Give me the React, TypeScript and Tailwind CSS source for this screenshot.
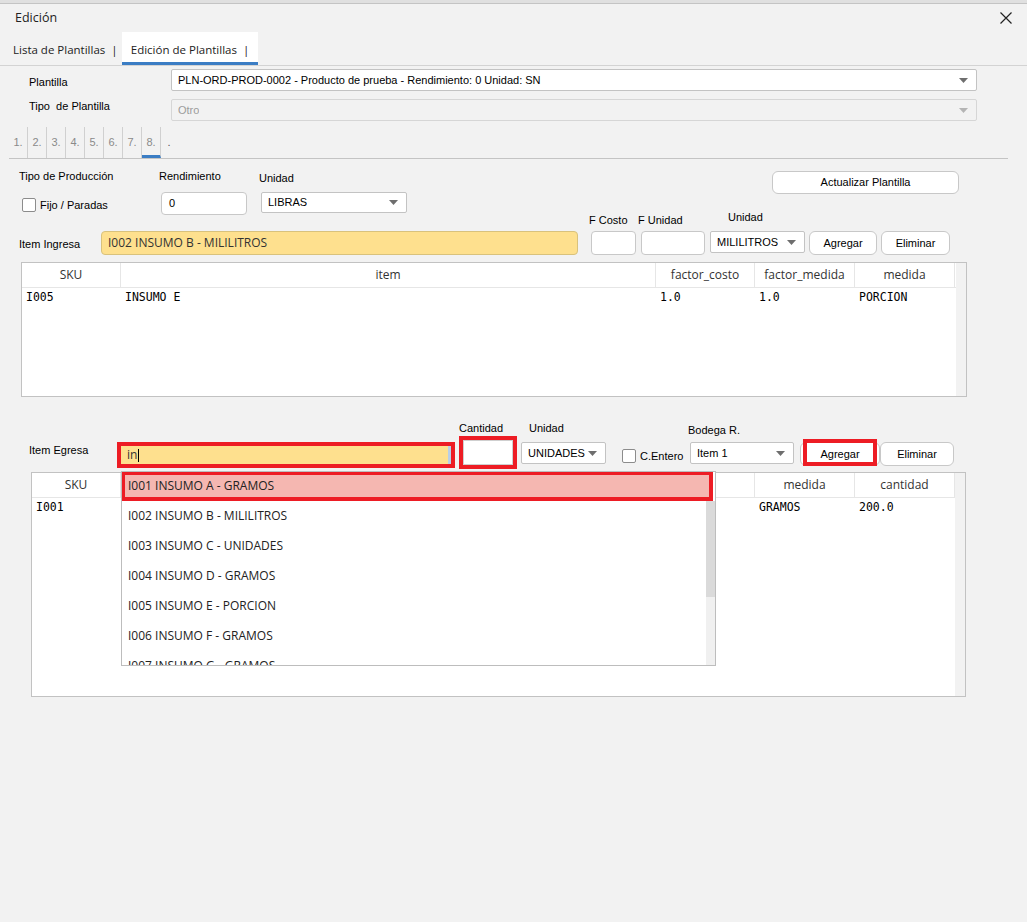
import React from 'react';
import clsx from 'clsx';

const mont = "font-['Open_Sans',sans-serif]";
const mono = "font-['DejaVu_Sans_Mono',monospace]";

// small triangle used by the combo boxes
function Caret({ muted }: { muted?: boolean }) {
    return (
        <svg width="9" height="5" viewBox="0 0 9 5">
            <path d="M0 0h9L4.5 5z" fill={muted ? '#b4b4b4' : '#6e6e6e'} />
        </svg>
    );
}

function Combo({ value, className, muted }: { value: string; className?: string; muted?: boolean }) {
    return (
        <div className={clsx(
            'flex items-center justify-between border rounded-[2px] pl-[6px] pr-[8px]',
            muted ? 'bg-[#f2f2f2] border-[#d6d6d6] text-[#9c9c9c]' : 'bg-white border-[#c3c3c3]',
            className
        )}>
            <span className="truncate">{value}</span>
            <Caret muted={muted} />
        </div>
    );
}

function Button({ label, className }: { label: string; className?: string }) {
    return (
        <div className={clsx('flex items-center justify-center bg-white border border-[#c8c8c8] rounded-[6px]', className)}>
            {label}
        </div>
    );
}

function Checkbox() {
    return <div className="w-[14px] h-[14px] bg-white border border-[#8c8c8c] rounded-[2px]" />;
}

type Col = { label: string; w: string };

function Grid({ cols, rows, className, children }: { cols: Col[]; rows: string[][]; className?: string; children?: React.ReactNode }) {
    return (
        <div className={clsx('relative flex bg-white border border-[#c2c2c2]', className)}>
            <div className="flex-1 flex flex-col">
                <div className={clsx('flex h-[25px] border-b border-[#e6e6e6] text-[12px] text-[#333]', mont)}>
                    {cols.map((c, i) => (
                        <div key={i} className={clsx('flex items-center justify-center border-r border-[#e6e6e6]', c.w)}>
                            {c.label}
                        </div>
                    ))}
                </div>
                {rows.map((r, ri) => (
                    <div key={ri} className={clsx('flex h-[19px] items-center text-[11.5px]', mono)}>
                        {r.map((v, i) => (
                            <div key={i} className={clsx('pl-[4px]', cols[i].w)}>{v}</div>
                        ))}
                    </div>
                ))}
            </div>
            <div className="w-[10px] bg-[#f2f2f2]" />
            {children}
        </div>
    );
}

const insumos = [
    'I002 INSUMO B - MILILITROS',
    'I003 INSUMO C - UNIDADES',
    'I004 INSUMO D - GRAMOS',
    'I005 INSUMO E - PORCION',
    'I006 INSUMO F - GRAMOS',
    'I007 INSUMO G - GRAMOS',
];

// autocomplete list opened under "Item Egresa"
function Suggestions() {
    return (
        <div className={clsx('absolute left-[89px] top-[-2px] w-[595px] h-[195px] bg-white border border-[#bdbdbd] flex flex-col overflow-hidden text-[12px] text-[#222]', mont)}>
            <div className="-ml-px -mt-px w-[592px] h-[30px] shrink-0 border-[4px] border-[#ed1c24] bg-[#f5b7b1] flex items-center pl-[3px]">
                I001 INSUMO A - GRAMOS
            </div>
            <div className="flex flex-1 min-h-0">
                <div className="flex-1 flex flex-col overflow-hidden">
                    {insumos.map((s) => (
                        <div key={s} className="h-[30px] shrink-0 flex items-center pl-[6px]">{s}</div>
                    ))}
                </div>
                <div className="w-[9px] flex flex-col bg-[#f0f0f0]">
                    <div className="h-[96px] bg-[#dadada]" />
                </div>
            </div>
        </div>
    );
}

export default function App() {
    return (
        <div className="w-[1027px] h-[922px] overflow-hidden bg-[#f2f2f2] text-[11px] text-black font-['Liberation_Sans',Arial,sans-serif]">
            <div className="h-[4px] bg-[#e0e0e0] border-b border-[#c4c4c4]" />

            {/* window title */}
            <div className="h-[28px] flex items-center justify-between pl-[15px] pr-[15px]">
                <span className={clsx('text-[12.5px] text-[#222]', mont)}>Edición</span>
                <svg width="12" height="12" viewBox="0 0 12 12">
                    <path d="M0.5 0.5L11.5 11.5M11.5 0.5L0.5 11.5" stroke="#222" strokeWidth="1.2" />
                </svg>
            </div>

            {/* top tabs */}
            <div className={clsx('h-[34px] flex border-b border-[#d3d3d3] text-[11.5px] text-[#222]', mont)}>
                <div className="w-[122px] flex items-center pl-[13px] pt-[2px]">Lista de Plantillas&nbsp;&nbsp;|</div>
                <div className="w-[136px] flex items-center justify-center bg-white border-b-[3px] border-[#3b7dc4] pt-[5px]">
                    Edición de Plantillas&nbsp;&nbsp;|
                </div>
            </div>

            {/* plantilla */}
            <div className="mt-[3px] flex items-center h-[22px]">
                <div className="w-[171px] pl-[29px] pt-[4px]">Plantilla</div>
                <Combo className="w-[806px] h-[22px]" value="PLN-ORD-PROD-0002 - Producto de prueba - Rendimiento: 0 Unidad: SN" />
            </div>
            <div className="mt-[8px] flex items-center h-[22px]">
                <div className="w-[171px] pl-[29px] -mt-[7px]">Tipo&nbsp; de Plantilla</div>
                <Combo className="w-[806px] h-[22px]" value="Otro" muted />
            </div>

            {/* step tabs */}
            <div className="mt-[6px] ml-[9px] mr-[19px] h-[32px] flex border-b border-[#c4c4c4] text-[#8a8a8a]">
                {['1.', '2.', '3.', '4.', '5.', '6.', '7.', '8.'].map((s, i) => (
                    <div key={s} className={clsx(
                        'w-[19px] flex items-center justify-center border-r border-[#d0d0d0]',
                        i === 7 && 'border-b-[3px] border-b-[#3b7dc4] pt-[3px]'
                    )}>{s}</div>
                ))}
                <div className="w-[16px] flex items-center justify-center text-[#555]">.</div>
            </div>

            {/* produccion */}
            <div className="h-[48px] flex items-start pl-[19px]">
                <div className="w-[140px] pt-[10px]">
                    <div className="h-[14px] leading-[14px]">Tipo de Producción</div>
                    <div className="mt-[15px] ml-[3px] flex items-center gap-[4px] h-[14px]">
                        <Checkbox />
                        <span>Fijo / Paradas</span>
                    </div>
                </div>
                <div className="w-[100px] pt-[10px]">
                    <div className="h-[14px] leading-[14px]">Rendimiento</div>
                    <div className="mt-[9px] ml-[2px] w-[86px] h-[23px] bg-white border border-[#c8c8c8] rounded-[4px] flex items-center pl-[7px]">0</div>
                </div>
                <div className="pt-[12px]">
                    <div className="h-[14px] leading-[14px]">Unidad</div>
                    <Combo className="mt-[7px] ml-[2px] w-[146px] h-[21px]" value="LIBRAS" />
                </div>
                <Button label="Actualizar Plantilla" className="ml-auto mr-[68px] mt-[12px] w-[187px] h-[23px]" />
            </div>

            {/* item ingresa */}
            <div className="h-[48px] flex items-start">
                <div className="pt-[24px] flex items-center pl-[19px]">
                    <div className="w-[82px] pt-[2px]">Item Ingresa</div>
                    <div className={clsx('w-[477px] h-[24px] bg-[#fee08e] border border-[#d9c27c] rounded-[4px] flex items-center pl-[6px] text-[12px] text-[#333]', mont)}>
                        I002 INSUMO B - MILILITROS
                    </div>
                </div>
                <div className="ml-[11px] pt-[6px]">
                    <div className="h-[14px] leading-[14px]">F Costo</div>
                    <div className="mt-[4px] ml-[2px] w-[45px] h-[24px] bg-white border border-[#c8c8c8] rounded-[4px]" />
                </div>
                <div className="ml-[2px] pt-[6px]">
                    <div className="h-[14px] leading-[14px]">F Unidad</div>
                    <div className="mt-[4px] ml-[3px] w-[64px] h-[24px] bg-white border border-[#c8c8c8] rounded-[4px]" />
                </div>
                <div className="ml-[5px] pt-[3px]">
                    <div className="h-[14px] leading-[14px] pl-[18px]">Unidad</div>
                    <Combo className="mt-[7px] w-[95px] h-[22px]" value="MILILITROS" />
                </div>
                <Button label="Agregar" className="ml-[4px] mt-[24px] w-[68px] h-[24px]" />
                <Button label="Eliminar" className="ml-[4px] mt-[24px] w-[69px] h-[24px]" />
            </div>

            <Grid
                className="mt-[7px] ml-[21px] w-[946px] h-[135px]"
                cols={[
                    { label: 'SKU', w: 'w-[99px]' },
                    { label: 'item', w: 'w-[535px]' },
                    { label: 'factor_costo', w: 'w-[99px]' },
                    { label: 'factor_medida', w: 'w-[100px]' },
                    { label: 'medida', w: 'w-[100px]' },
                ]}
                rows={[['I005', 'INSUMO E', '1.0', '1.0', 'PORCION']]}
            />

            {/* item egresa */}
            <div className="h-[72px] flex items-start">
                <div className="w-[117px] pl-[29px] pt-[46px] leading-[14px]">Item Egresa</div>
                <div className="mt-[45px] w-[338px] h-[26px] border-[4px] border-[#ed1c24]">
                    <div className="h-full flex items-center bg-[#fee08e] border-r-[3px] border-[#b9cfe8] pl-[6px] text-[12px] text-[#333]">
                        <span className={mont}>in</span>
                        <span className="ml-px w-px h-[13px] bg-black" />
                    </div>
                </div>
                <div className="ml-[4px] pt-[24px]">
                    <div className="h-[14px] leading-[14px]">Cantidad</div>
                    <div className="mt-px w-[58px] h-[33px] border-[4px] border-[#ed1c24]">
                        <div className="h-full bg-white border border-[#cfcfcf]" />
                    </div>
                </div>
                <div className="ml-[4px] pt-[24px]">
                    <div className="h-[14px] leading-[14px] pl-[8px]">Unidad</div>
                    <Combo className="mt-[7px] w-[85px] h-[22px]" value="UNIDADES" />
                </div>
                <div className="ml-[16px] w-[66px] pt-[51px] flex items-center gap-[4px]">
                    <Checkbox />
                    <span>C.Entero</span>
                </div>
                <div className="pt-[26px]">
                    <div className="h-[14px] leading-[14px]">Bodega R.</div>
                    <Combo className="mt-[5px] ml-[2px] w-[104px] h-[22px]" value="Item 1" />
                </div>
                <div className="relative ml-[6px] mt-[45px]">
                    <Button label="Agregar" className="w-[80px] h-[24px]" />
                    <div className="absolute left-[3px] top-[-3px] w-[74px] h-[27px] border-[4px] border-[#ed1c24]" />
                </div>
                <Button label="Eliminar" className="mt-[45px] w-[74px] h-[24px]" />
            </div>

            <Grid
                className="mt-[3px] ml-[31px] w-[935px] h-[225px]"
                cols={[
                    { label: 'SKU', w: 'w-[89px]' },
                    { label: 'item', w: 'w-[634px]' },
                    { label: 'medida', w: 'w-[100px]' },
                    { label: 'cantidad', w: 'w-[100px]' },
                ]}
                rows={[['I001', '', 'GRAMOS', '200.0']]}
            >
                <Suggestions />
            </Grid>
        </div>
    );
}
